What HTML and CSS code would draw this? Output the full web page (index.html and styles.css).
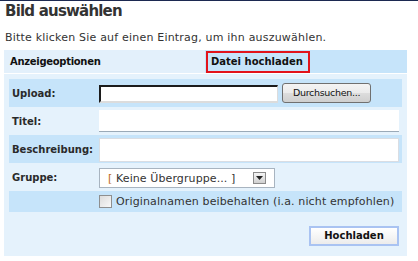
FILE: index.html
```html
<!DOCTYPE html>
<html lang="de">
<head>
<meta charset="utf-8">
<title>Bild auswählen</title>
<link rel="stylesheet" href="styles.css">
</head>
<body>
<div class="page">
  <h1 class="title">Bild auswählen</h1>
  <p class="intro">Bitte klicken Sie auf einen Eintrag, um ihn auszuwählen.</p>
  <div class="panel">
    <div class="tabs">
      <div class="tab tab-left">Anzeigeoptionen</div>
      <div class="tab tab-right"><span class="tab-active">Datei hochladen</span></div>
    </div>
    <div class="form">
      <div class="row row-dark">
        <div class="label">Upload:</div>
        <div class="field upload-field">
          <span class="file-input"></span>
          <span class="browse">Durchsuchen...</span>
        </div>
      </div>
      <div class="row">
        <div class="label">Titel:</div>
        <div class="field"><span class="text-input"></span></div>
      </div>
      <div class="row row-dark">
        <div class="label">Beschreibung:</div>
        <div class="field"><span class="text-input desc-input"></span></div>
      </div>
      <div class="row">
        <div class="label">Gruppe:</div>
        <div class="field">
          <span class="select"><span class="select-text"><span class="bracket">[</span> Keine Übergruppe... ]</span><span class="select-arrow"><svg width="7" height="4" viewBox="0 0 7 4"><path d="M0 0h7L3.5 4z" fill="#222"/></svg></span></span>
        </div>
      </div>
      <div class="row row-dark row-check">
        <div class="label"></div>
        <div class="field check-field"><span class="checkbox"></span><span class="check-label">Originalnamen beibehalten (i.a. nicht empfohlen)</span></div>
      </div>
      <div class="actions">
        <span class="submit">Hochladen</span>
      </div>
    </div>
  </div>
</div>
</body>
</html>
```

FILE: styles.css
```css
html, body {
  margin: 0;
  padding: 0;
  background: #ffffff;
}
body {
  font-family: "DejaVu Sans", Verdana, sans-serif;
  color: #333333;
  border-top: 1px solid #1c2951;
}
.page {
  padding: 0 11px 0 4px;
}
.title {
  margin: 0;
  padding: 1px 0 0 1px;
  font-size: 15px;
  line-height: 18px;
  font-weight: bold;
  color: #333333;
  letter-spacing: -0.8px;
}
.intro {
  margin: 0;
  padding: 11px 0 0 1px;
  font-size: 11px;
  line-height: 14px;
  color: #333333;
  height: 30px;
  box-sizing: border-box;
  letter-spacing: 0.2px;
}
.panel {
  background: #e5f2fc;
  height: 206px;
}
.tabs {
  display: flex;
  height: 23px;
  border-bottom: 1px solid #ffffff;
}
.tab {
  font-size: 10px;
  font-weight: bold;
  color: #111111;
  display: flex;
  align-items: center;
}
.tab-left {
  width: 201px;
  padding-left: 6px;
  box-sizing: border-box;
  background: #e3f0fb;
  letter-spacing: -0.3px;
}
.tab-right {
  flex: 1;
  background: #c6e4fa;
  align-items: flex-start;
  padding-top: 1px;
  padding-left: 1px;
}
.tab-active {
  display: inline-block;
  border: 2px solid #e2131b;
  height: 22px;
  box-sizing: border-box;
  line-height: 18px;
  padding: 0 5px 0 3px;
}
.form {
  padding: 5px 5px 0 5px;
}
.row {
  display: flex;
  align-items: center;
  height: 28px;
}
.row-dark {
  background: #c6e4fa;
}
.row-check {
  height: 21px;
}
.label {
  width: 90px;
  padding-left: 3px;
  box-sizing: border-box;
  font-size: 10px;
  font-weight: bold;
  color: #2a2a2a;
}
.field {
  flex: 1;
  display: flex;
  align-items: center;
}
.upload-field {
  gap: 4px;
}
.file-input {
  display: block;
  width: 179px;
  height: 18px;
  box-sizing: border-box;
  background: #ffffff;
  border-top: 2px solid #1c1c1c;
  border-left: 2px solid #1c1c1c;
  border-bottom: 2px solid #dcdcdc;
  border-right: 1px solid #dcdcdc;
  margin-top: 1px;
}
.browse {
  display: block;
  width: 89px;
  height: 20px;
  box-sizing: border-box;
  border: 1px solid #707070;
  border-radius: 3px;
  background: linear-gradient(#f4f4f4 0%, #ebebeb 50%, #dddddd 51%, #cfcfcf 100%);
  font-family: "DejaVu Sans", Tahoma, sans-serif;
  font-size: 9.5px;
  line-height: 18px;
  text-align: center;
  color: #111111;
  letter-spacing: -0.3px;
}
.text-input {
  display: block;
  width: 300px;
  height: 22px;
  background: #ffffff;
  box-sizing: border-box;
  border-bottom: 1px solid #9aaab8;
}
.desc-input {
  height: 24px;
  border: 1px solid #d9dde3;
  margin-top: 2px;
}
.select {
  display: flex;
  align-items: center;
  width: 176px;
  height: 20px;
  box-sizing: border-box;
  border: 1px solid #a8b4c0;
  background: #ffffff;
  margin-top: 2px;
}
.select-text {
  flex: 1;
  padding-left: 8px;
  font-size: 11px;
  color: #333333;
  white-space: nowrap;
  letter-spacing: 0.1px;
}
.bracket {
  color: #c06a22;
}
.select-arrow {
  width: 13px;
  height: 12px;
  box-sizing: border-box;
  border: 1px solid #8a8a8a;
  background: linear-gradient(#f4f4f4, #d0d0d0);
  margin-right: 8px;
  display: flex;
  align-items: center;
  justify-content: center;
}
.check-field {
  gap: 4px;
}
.checkbox {
  display: block;
  width: 13px;
  height: 13px;
  box-sizing: border-box;
  border: 1px solid #8e8f8f;
  background: linear-gradient(135deg, #dcdcdc, #f8f8f8);
}
.check-label {
  font-size: 11px;
  color: #333333;
  white-space: nowrap;
  letter-spacing: 0.13px;
}
.actions {
  display: flex;
  justify-content: flex-end;
  padding: 14px 3px 0 0;
}
.submit {
  display: block;
  width: 90px;
  height: 20px;
  box-sizing: border-box;
  border: 2px solid #a9c3f2;
  background: linear-gradient(#ffffff, #ececec);
  font-size: 10px;
  font-weight: bold;
  line-height: 16px;
  text-align: center;
  color: #111111;
}
```
